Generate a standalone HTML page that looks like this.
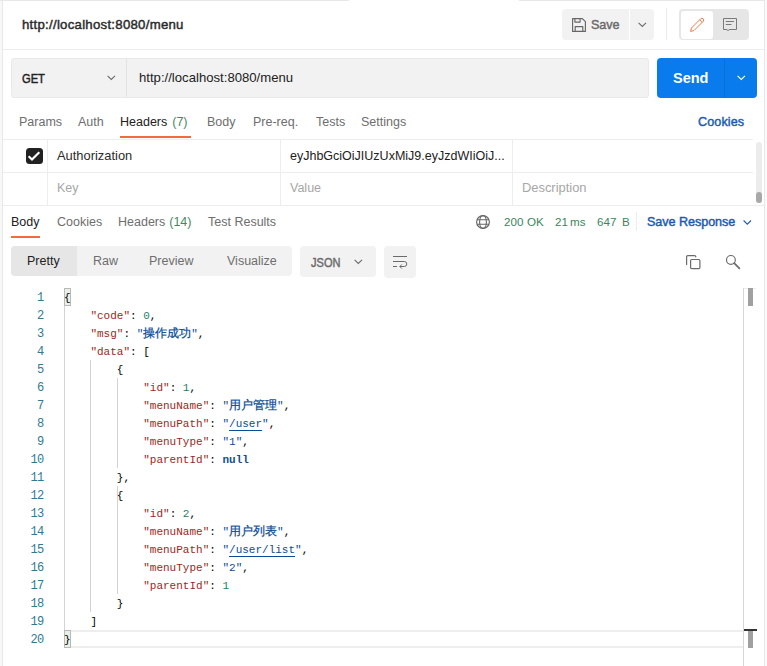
<!DOCTYPE html>
<html><head><meta charset="utf-8">
<style>
html,body{margin:0;padding:0;}
body{width:767px;height:666px;position:relative;overflow:hidden;background:#fff;font-family:"Liberation Sans",sans-serif;}
.a{position:absolute;}
.t{position:absolute;white-space:nowrap;line-height:1;}
.ln{position:absolute;background:#ededed;}
svg{position:absolute;overflow:visible;}
/* code */
.code{position:absolute;left:0;top:289px;width:767px;height:378px;font-family:"Liberation Mono",monospace;font-size:11px;}
.row{position:absolute;height:18px;line-height:18px;white-space:pre;}
.num{position:absolute;right:723.4px;text-align:right;color:#2f7a92;width:40px;font-size:12px;letter-spacing:-0.6px;}
.k{color:#9e2622;}
.s{color:#0b4c96;}
.n{color:#1b7f6a;}
.p{color:#000;}
.nl{color:#124f8c;font-weight:bold;}
.cj{letter-spacing:0;font-size:12px;-webkit-text-stroke:0.25px #0b4c96;}
.u{text-decoration:underline;text-decoration-color:#0b4c96;text-underline-offset:3px;}
.guide{position:absolute;width:1px;background:#d3d3d3;}
</style></head><body>

<!-- frame -->
<div class="a" style="left:0;top:0;width:2px;height:666px;background:#f8f8f8"></div>
<div class="a" style="left:2px;top:0;width:1px;height:666px;background:#e8e8e8"></div>
<div class="a" style="left:0;top:0;width:349px;height:1px;background:#e8e8e8"></div>
<div class="a" style="left:519px;top:0;width:248px;height:1px;background:#e8e8e8"></div>
<div class="a" style="left:764px;top:0;width:1px;height:666px;background:#e8e8e8"></div>
<div class="a" style="left:765px;top:0;width:2px;height:666px;background:#fafafa"></div>

<!-- title bar -->
<div class="t" style="left:22px;top:18px;font-size:13.2px;letter-spacing:0.27px;color:#2b2b2b;-webkit-text-stroke:0.45px #2b2b2b">http://localhost:8080/menu</div>

<!-- save button -->
<div class="a" style="left:562px;top:9px;width:92px;height:31px;background:#f2f2f2;border-radius:4px"></div>
<div class="a" style="left:629px;top:9px;width:1px;height:31px;background:#fff"></div>
<svg style="left:572px;top:18px" width="14" height="14" viewBox="0 0 14 14"><path d="M0.6 0.6H10.4L13.4 3.6V13.4H0.6Z M2.9 0.6V4.1H8.1V0.6 M3.2 13.4V8.6H10.8V13.4" fill="none" stroke="#666" stroke-width="1.15" stroke-linejoin="round"/></svg>
<div class="t" style="left:591px;top:19px;font-size:12.6px;letter-spacing:-0.1px;color:#6b6b6b;-webkit-text-stroke:0.45px #6b6b6b">Save</div>
<svg style="left:638px;top:22px" width="9" height="6" viewBox="0 0 9 6"><path d="M0.6 0.9L4.3 4.5L8 0.9" fill="none" stroke="#6b6b6b" stroke-width="1.1"/></svg>

<div class="a" style="left:666px;top:8px;width:1px;height:32px;background:#ededed"></div>

<!-- toggle -->
<div class="a" style="left:679px;top:9px;width:70px;height:31px;background:#e6e6e6;border-radius:4px"></div>
<div class="a" style="left:681px;top:11px;width:32px;height:28px;background:#fff;border-radius:3px"></div>
<svg style="left:690px;top:18px" width="14" height="14" viewBox="0 0 14 14"><path d="M0.6 13.4L3.99 12.55L13.27 3.27A1.8 1.8 0 0 0 10.73 0.73L1.45 10.01Z M12.21 4.33L9.67 1.79" fill="none" stroke="#ef7a4e" stroke-width="1" stroke-linejoin="round"/></svg>
<svg style="left:723px;top:18px" width="14" height="14" viewBox="0 0 14 14"><path d="M0.5 0.5H13.5V11.5H6L5 12.8L4 11.5H0.5Z M2.8 3.5H11 M2.8 6.5H8.5" fill="none" stroke="#7a7a7a" stroke-width="1"/></svg>

<div class="ln" style="left:3px;top:49px;width:761px;height:1px"></div>

<!-- url bar -->
<div class="a" style="left:11px;top:58px;width:636px;height:38px;background:#f2f2f2;border:1px solid #e9e9e9;border-radius:3px"></div>
<div class="a" style="left:126px;top:59px;width:1px;height:38px;background:#e3e3e3"></div>
<div class="t" style="left:22px;top:73px;font-size:12.4px;letter-spacing:0;transform:scaleX(0.9);transform-origin:0 0;color:#212121;-webkit-text-stroke:0.45px #212121">GET</div>
<svg style="left:107px;top:75px" width="9" height="6" viewBox="0 0 9 6"><path d="M0.6 0.9L4.3 4.5L8 0.9" fill="none" stroke="#6b6b6b" stroke-width="1.1"/></svg>
<div class="t" style="left:139px;top:71px;font-size:13.15px;color:#212121">http://localhost:8080/menu</div>

<!-- send -->
<div class="a" style="left:657px;top:58px;width:100px;height:40px;background:#097bed;border-radius:4px"></div>
<div class="a" style="left:724px;top:58px;width:1px;height:40px;background:#0a6fd6"></div>
<div class="t" style="left:673px;top:71px;font-size:14.5px;font-weight:bold;color:#fff">Send</div>
<svg style="left:737px;top:75px" width="9" height="6" viewBox="0 0 9 6"><path d="M0.6 0.9L4.3 4.5L8 0.9" fill="none" stroke="#fff" stroke-width="1.1"/></svg>

<!-- request tabs -->
<div class="t" style="left:19px;top:116px;font-size:12.5px;color:#6e6e6e">Params</div>
<div class="t" style="left:78px;top:116px;font-size:12.5px;color:#6e6e6e">Auth</div>
<div class="t" style="left:120px;top:116px;font-size:12.5px;color:#212121">Headers <span style="color:#3f8a62;margin-left:1.5px">(7)</span></div>
<div class="t" style="left:207px;top:116px;font-size:12.5px;color:#6e6e6e">Body</div>
<div class="t" style="left:253px;top:116px;font-size:12.5px;color:#6e6e6e">Pre-req.</div>
<div class="t" style="left:316px;top:116px;font-size:12.5px;color:#6e6e6e">Tests</div>
<div class="t" style="left:361px;top:116px;font-size:12.5px;color:#6e6e6e">Settings</div>
<div class="t" style="left:698px;top:116px;font-size:12.6px;letter-spacing:0.1px;color:#1d5bb0;-webkit-text-stroke:0.45px #1d5bb0">Cookies</div>
<div class="a" style="left:120px;top:136px;width:71px;height:2px;background:#f26b3a"></div>

<!-- table -->
<div class="ln" style="left:3px;top:139px;width:750px;height:1px"></div>
<div class="ln" style="left:3px;top:172px;width:750px;height:1px"></div>
<div class="ln" style="left:3px;top:205px;width:761px;height:1px"></div>
<div class="ln" style="left:47px;top:140px;width:1px;height:65px"></div>
<div class="ln" style="left:280px;top:140px;width:1px;height:65px"></div>
<div class="ln" style="left:512px;top:140px;width:1px;height:65px"></div>
<div class="a" style="left:26px;top:148px;width:16.5px;height:16px;background:#212121;border-radius:3.5px"></div>
<svg style="left:26px;top:148px" width="16" height="16" viewBox="0 0 16 16"><path d="M2.6 8.2L6 11.5L13.3 4.3" fill="none" stroke="#fff" stroke-width="2.2"/></svg>
<div class="t" style="left:57px;top:150px;font-size:12.9px;color:#2b2b2b">Authorization</div>
<div class="t" style="left:290px;top:150px;font-size:12.5px;color:#212121">eyJhbGciOiJIUzUxMiJ9.eyJzdWIiOiJ...</div>
<div class="t" style="left:57px;top:182px;font-size:12.5px;color:#a6a6a6">Key</div>
<div class="t" style="left:290px;top:182px;font-size:12.5px;color:#a6a6a6">Value</div>
<div class="t" style="left:522px;top:182px;font-size:12.9px;color:#a6a6a6">Description</div>
<div class="a" style="left:756px;top:142px;width:6px;height:61px;background:#ececec;border-radius:3px"></div>
<div class="a" style="left:756px;top:192px;width:6px;height:11px;background:#a8a8a8;border-radius:3px"></div>

<!-- response tabs -->
<div class="t" style="left:11px;top:216px;font-size:12.5px;color:#212121">Body</div>
<div class="t" style="left:57px;top:216px;font-size:12.5px;color:#6e6e6e">Cookies</div>
<div class="t" style="left:118px;top:216px;font-size:12.5px;color:#6e6e6e">Headers <span style="color:#3f8a62;margin-left:0.5px">(14)</span></div>
<div class="t" style="left:208px;top:216px;font-size:12.5px;color:#6e6e6e">Test Results</div>
<div class="a" style="left:11px;top:236px;width:29px;height:2px;background:#f26b3a"></div>

<svg style="left:476px;top:215px" width="14" height="14" viewBox="0 0 14 14"><circle cx="7" cy="7" r="6.4" fill="none" stroke="#666" stroke-width="1.15"/><ellipse cx="7" cy="7" rx="3.4" ry="6.4" fill="none" stroke="#666" stroke-width="1.15"/><path d="M1 4.7H13M1 9.3H13" stroke="#666" stroke-width="1.1"/></svg>
<div class="t" style="left:504px;top:216px;font-size:11.6px;color:#3a8560">200</div>
<div class="t" style="left:527px;top:216px;font-size:11.6px;color:#3a8560">OK</div>
<div class="t" style="left:555px;top:216px;font-size:11.6px;color:#3a8560">21</div>
<div class="t" style="left:570px;top:216px;font-size:11.6px;color:#3a8560">ms</div>
<div class="t" style="left:597px;top:216px;font-size:11.6px;color:#3a8560">647</div>
<div class="t" style="left:622px;top:216px;font-size:11.6px;color:#3a8560">B</div>
<div class="a" style="left:636px;top:212px;width:1px;height:19px;background:#ededed"></div>
<div class="t" style="left:647px;top:216px;font-size:12.6px;letter-spacing:-0.05px;color:#1d5bb0;-webkit-text-stroke:0.45px #1d5bb0">Save Response</div>
<svg style="left:743px;top:220px" width="9" height="5" viewBox="0 0 9 5"><path d="M0.6 0.5L4.3 4.2L8 0.5" fill="none" stroke="#1d5bb0" stroke-width="1.1"/></svg>

<!-- segmented -->
<div class="a" style="left:11px;top:246px;width:281px;height:30px;background:#f2f2f2;border-radius:4px"></div>
<div class="a" style="left:11px;top:246px;width:66px;height:30px;background:#e6e6e6;border-radius:4px 0 0 4px"></div>
<div class="t" style="left:27px;top:255px;font-size:12.5px;color:#212121">Pretty</div>
<div class="t" style="left:93px;top:255px;font-size:12.5px;color:#6e6e6e">Raw</div>
<div class="t" style="left:149px;top:255px;font-size:12.5px;color:#6e6e6e">Preview</div>
<div class="t" style="left:227px;top:255px;font-size:12.5px;color:#6e6e6e">Visualize</div>

<div class="a" style="left:300px;top:246px;width:76px;height:31px;background:#f2f2f2;border-radius:4px"></div>
<div class="t" style="left:311px;top:257px;font-size:12px;letter-spacing:0;transform:scaleX(0.92);transform-origin:0 0;color:#6b6b6b;-webkit-text-stroke:0.45px #6b6b6b">JSON</div>
<svg style="left:354px;top:259px" width="9" height="6" viewBox="0 0 9 6"><path d="M0.6 0.9L4.3 4.5L8 0.9" fill="none" stroke="#6b6b6b" stroke-width="1.1"/></svg>
<div class="a" style="left:384px;top:246px;width:32px;height:32px;background:#f2f2f2;border-radius:4px"></div>
<svg style="left:393px;top:256px" width="14" height="13" viewBox="0 0 14 13"><path d="M0 0.5H14 M0 5.5H11.3A2.5 2.5 0 0 1 11.3 10.5H7 M8.8 8.5L6.8 10.5L8.8 12.5 M0 10.5H4" fill="none" stroke="#6b6b6b" stroke-width="1"/></svg>

<svg style="left:686px;top:255px" width="15" height="14" viewBox="0 0 15 14"><path d="M0.6 9.6V1.8A1.2 1.2 0 0 1 1.8 0.6H8.6A1.2 1.2 0 0 1 9.8 1.8" fill="none" stroke="#6b6b6b" stroke-width="1.2" stroke-linecap="round"/><rect x="4.6" y="4.5" width="9.3" height="9.1" rx="1.2" fill="none" stroke="#6b6b6b" stroke-width="1.2"/></svg>
<svg style="left:726px;top:255px" width="14" height="14" viewBox="0 0 14 14"><circle cx="4.9" cy="4.9" r="4.4" fill="none" stroke="#6b6b6b" stroke-width="1.15"/><path d="M8.2 8.2L13.4 13.4" stroke="#6b6b6b" stroke-width="1.7" stroke-linecap="round"/></svg>

<!-- editor -->
<div class="a" style="left:743px;top:288px;width:1px;height:378px;background:#d6d6d6"></div>
<div class="a" style="left:744px;top:288px;width:12px;height:1px;background:#eeeeee"></div>
<div class="a" style="left:748px;top:288px;width:5px;height:18px;background:#a0a0a0"></div>
<div class="a" style="left:744px;top:629px;width:13px;height:2px;background:#333"></div>
<div class="a" style="left:748px;top:631px;width:5px;height:17px;background:#a0a0a0"></div>

<!-- current line -->
<div class="a" style="left:64px;top:630px;width:679px;height:14px;border-top:2px solid #eeeeee;border-bottom:2px solid #eeeeee"></div>
<!-- bracket match boxes -->
<div class="a" style="left:64px;top:288px;width:5px;height:16px;background:#e8f0e8;border:1px solid #b9b9b9"></div>
<div class="a" style="left:64px;top:630px;width:5px;height:16px;background:#e8f0e8;border:1px solid #b9b9b9"></div>

<!-- guides -->
<div class="guide" style="left:64px;top:306px;height:324px"></div>
<div class="guide" style="left:90px;top:360px;height:252px"></div>
<div class="guide" style="left:117px;top:378px;height:90px"></div>
<div class="guide" style="left:117px;top:486px;height:108px"></div>

<div class="code">
<div class="row num" style="top:0">1</div>
<div class="row num" style="top:18px">2</div>
<div class="row num" style="top:36px">3</div>
<div class="row num" style="top:54px">4</div>
<div class="row num" style="top:72px">5</div>
<div class="row num" style="top:90px">6</div>
<div class="row num" style="top:108px">7</div>
<div class="row num" style="top:126px">8</div>
<div class="row num" style="top:144px">9</div>
<div class="row num" style="top:162px">10</div>
<div class="row num" style="top:180px">11</div>
<div class="row num" style="top:198px">12</div>
<div class="row num" style="top:216px">13</div>
<div class="row num" style="top:234px">14</div>
<div class="row num" style="top:252px">15</div>
<div class="row num" style="top:270px">16</div>
<div class="row num" style="top:288px">17</div>
<div class="row num" style="top:306px">18</div>
<div class="row num" style="top:324px">19</div>
<div class="row num" style="top:342px">20</div>

<div class="row" style="left:64px;top:0"><span class="p">{</span></div>
<div class="row" style="left:64px;top:18px">    <span class="k">"code"</span><span class="p">: </span><span class="n">0</span><span class="p">,</span></div>
<div class="row" style="left:64px;top:36px">    <span class="k">"msg"</span><span class="p">: </span><span class="s">"<span class="cj">操作成功</span>"</span><span class="p">,</span></div>
<div class="row" style="left:64px;top:54px">    <span class="k">"data"</span><span class="p">: [</span></div>
<div class="row" style="left:64px;top:72px">        <span class="p">{</span></div>
<div class="row" style="left:64px;top:90px">            <span class="k">"id"</span><span class="p">: </span><span class="n">1</span><span class="p">,</span></div>
<div class="row" style="left:64px;top:108px">            <span class="k">"menuName"</span><span class="p">: </span><span class="s">"<span class="cj">用户管理</span>"</span><span class="p">,</span></div>
<div class="row" style="left:64px;top:126px">            <span class="k">"menuPath"</span><span class="p">: </span><span class="s">"<span class="u">/user</span>"</span><span class="p">,</span></div>
<div class="row" style="left:64px;top:144px">            <span class="k">"menuType"</span><span class="p">: </span><span class="s">"1"</span><span class="p">,</span></div>
<div class="row" style="left:64px;top:162px">            <span class="k">"parentId"</span><span class="p">: </span><span class="nl">null</span></div>
<div class="row" style="left:64px;top:180px">        <span class="p">},</span></div>
<div class="row" style="left:64px;top:198px">        <span class="p">{</span></div>
<div class="row" style="left:64px;top:216px">            <span class="k">"id"</span><span class="p">: </span><span class="n">2</span><span class="p">,</span></div>
<div class="row" style="left:64px;top:234px">            <span class="k">"menuName"</span><span class="p">: </span><span class="s">"<span class="cj">用户列表</span>"</span><span class="p">,</span></div>
<div class="row" style="left:64px;top:252px">            <span class="k">"menuPath"</span><span class="p">: </span><span class="s">"<span class="u">/user/list</span>"</span><span class="p">,</span></div>
<div class="row" style="left:64px;top:270px">            <span class="k">"menuType"</span><span class="p">: </span><span class="s">"2"</span><span class="p">,</span></div>
<div class="row" style="left:64px;top:288px">            <span class="k">"parentId"</span><span class="p">: </span><span class="n">1</span></div>
<div class="row" style="left:64px;top:306px">        <span class="p">}</span></div>
<div class="row" style="left:64px;top:324px">    <span class="p">]</span></div>
<div class="row" style="left:64px;top:342px"><span class="p">}</span></div>
</div>

</body></html>
